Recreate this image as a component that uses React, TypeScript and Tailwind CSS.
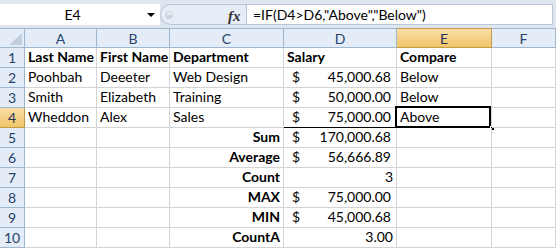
import React from 'react';

type Cell = {
    text?: string;
    bold?: boolean;
    align?: 'left' | 'right';
    money?: boolean;
    underline?: boolean;
};

const colWidths = ['w-[72px]', 'w-[73px]', 'w-[114px]', 'w-[113px]', 'w-[95px]', 'w-[64px]'];
const colNames = ['A', 'B', 'C', 'D', 'E', 'F'];

const rows: Cell[][] = [
    [{ text: 'Last Name', bold: true }, { text: 'First Name', bold: true }, { text: 'Department', bold: true }, { text: 'Salary', bold: true }, { text: 'Compare', bold: true }, {}],
    [{ text: 'Poohbah' }, { text: 'Deeeter' }, { text: 'Web Design' }, { text: '45,000.68', money: true }, { text: 'Below' }, {}],
    [{ text: 'Smith' }, { text: 'Elizabeth' }, { text: 'Training' }, { text: '50,000.00', money: true }, { text: 'Below' }, {}],
    [{ text: 'Wheddon' }, { text: 'Alex' }, { text: 'Sales' }, { text: '75,000.00', money: true, underline: true }, { text: 'Above' }, {}],
    [{}, {}, { text: 'Sum', bold: true, align: 'right' }, { text: '170,000.68', money: true }, {}, {}],
    [{}, {}, { text: 'Average', bold: true, align: 'right' }, { text: '56,666.89', money: true }, {}, {}],
    [{}, {}, { text: 'Count', bold: true, align: 'right' }, { text: '3', align: 'right' }, {}, {}],
    [{}, {}, { text: 'MAX', bold: true, align: 'right' }, { text: '75,000.00', money: true }, {}, {}],
    [{}, {}, { text: 'MIN', bold: true, align: 'right' }, { text: '45,000.68', money: true }, {}, {}],
    [{}, {}, { text: 'CountA', bold: true, align: 'right' }, { text: '3.00', align: 'right' }, {}, {}],
];

const FormulaBar: React.FC = () => (
    <div className="h-[28px] bg-[#dfe6ef] pt-[4px] flex">
        <div className="h-[21px] w-[160px] bg-white flex items-center relative">
            <span className="w-[145px] text-center text-[14px] text-black">E4</span>
            <span className="absolute left-[147px] top-[9px] w-0 h-0 border-l-[4px] border-r-[4px] border-t-[4px] border-l-transparent border-r-transparent border-t-black" />
        </div>
        <div className="h-[21px] w-[86px] bg-[#e6edf6] rounded-l-full border border-r-0 border-[#b9c6d6] flex items-center relative">
            <span className="ml-[4px] w-[8px] h-[8px] rounded-full bg-gradient-to-b from-[#f4f6f9] to-[#c3cbd6] border border-[#c7cfda]" />
            <span className="absolute left-[67px] top-[0px] text-[15px] italic font-bold text-[#333] [font-family:'Liberation_Serif',serif]">fx</span>
        </div>
        <div className="h-[21px] flex-1 bg-white border border-[#b9c6d6] mr-[3px] flex items-center pl-[6px] text-[14px] text-black">
            =IF(D4&gt;D6,"Above","Below")
        </div>
    </div>
);

const App: React.FC = () => {
    return (
        <div className="w-[556px] h-[250px] overflow-hidden bg-white [font-family:Lato,'Liberation_Sans',sans-serif]">
            <FormulaBar />
            <div className="flex h-[20px]">
                <div className="w-[25px] h-[20px] bg-[#e4ecf7] border-r border-b border-t border-[#9eb6ce] relative">
                    <svg className="absolute right-[2px] bottom-[2px]" width="13" height="12" viewBox="0 0 13 12">
                        <polygon points="13,0 13,12 0,12" fill="#c2cedd" />
                    </svg>
                </div>
                {colNames.map((c, i) => (
                    <div
                        key={c}
                        className={`${colWidths[i]} h-[20px] border-r border-b border-t flex items-center justify-center text-[14px] ${
                            c === 'E'
                                ? 'bg-gradient-to-b from-[#f9dea6] to-[#f2c567] border-[#c29b4b] text-[#1f3358]'
                                : 'bg-[#e4ecf7] border-[#9eb6ce] text-[#27436b]'
                        }`}
                    >
                        {c}
                    </div>
                ))}
            </div>
            {rows.map((row, r) => (
                <div key={r} className="flex h-[20px]">
                    <div
                        className={`w-[25px] h-[20px] border-r border-b flex items-center justify-center text-[14px] ${
                            r === 3
                                ? 'bg-gradient-to-b from-[#f9dea6] to-[#f2c567] border-[#c29b4b] text-[#1f3358]'
                                : 'bg-[#e4ecf7] border-[#9eb6ce] text-[#27436b]'
                        }`}
                    >
                        {r + 1}
                    </div>
                    {row.map((cell, i) => {
                        const selected = r === 3 && i === 4;
                        return (
                            <div
                                key={i}
                                className={`${colWidths[i]} h-[20px] relative border-r border-b border-[#d4d4d4] flex items-end pb-[1px] text-[14px] leading-[18px] text-black whitespace-nowrap ${
                                    cell.bold ? 'font-bold' : ''
                                } ${cell.align === 'right' ? 'justify-end pr-[3px]' : 'pl-[3px]'} ${
                                    cell.underline ? 'border-b-black' : ''
                                }`}
                            >
                                {cell.money ? (
                                    <div className="flex w-full pl-[5px] pr-[5px]">
                                        <span>$</span>
                                        <span className="ml-auto">{cell.text}</span>
                                    </div>
                                ) : (
                                    cell.text
                                )}
                                {selected && (
                                    <>
                                        <span className="absolute left-[-2px] top-[-2px] w-[96px] h-[22px] border-2 border-black" />
                                        <span className="absolute right-[-4px] bottom-[-4px] w-[5px] h-[5px] bg-black border border-white" />
                                    </>
                                )}
                            </div>
                        );
                    })}
                </div>
            ))}
        </div>
    );
};

export default App;
